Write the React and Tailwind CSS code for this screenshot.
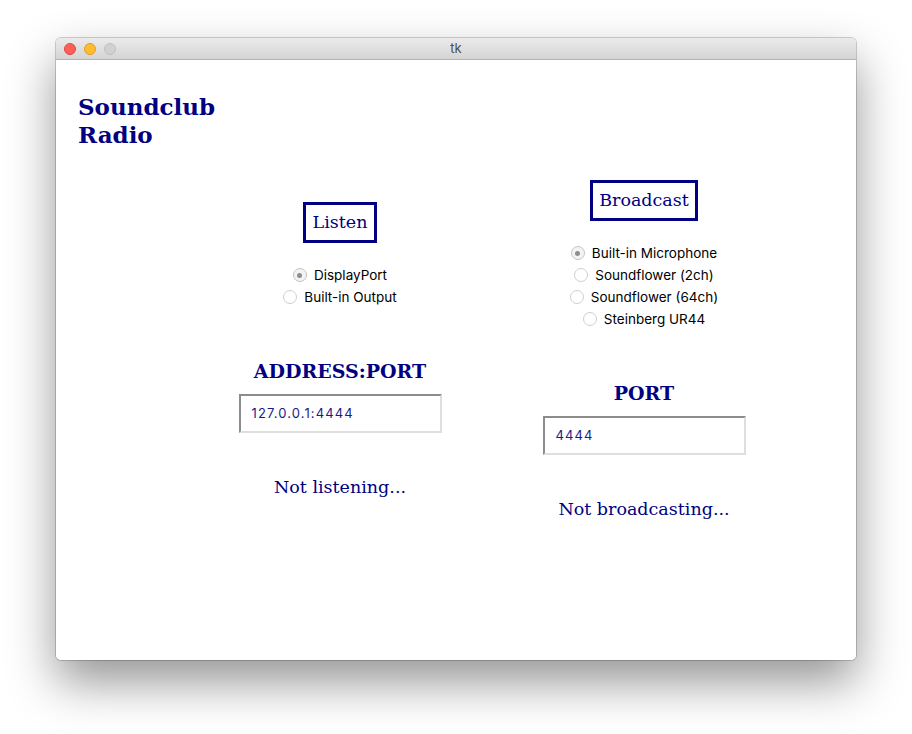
import React from "react";

const serif = { fontFamily: '"DejaVu Serif", Georgia, serif' };
const sans = { fontFamily: 'Inter, "Liberation Sans", sans-serif' };

function Radio({ label, checked }) {
  return (
    <div className="flex h-[22px] items-center justify-center">
      <span
        className={
          "flex h-[14px] w-[14px] items-center justify-center rounded-full border " +
          (checked ? "border-[#c4c4c4] bg-[#f3f3f3]" : "border-[#cfcfcf] bg-white")
        }
      >
        {checked && <span className="h-[5px] w-[5px] rounded-full bg-[#8e8e8e]" />}
      </span>
      <span className="ml-[7px] text-[13.5px] leading-[16px] text-black" style={sans}>
        {label}
      </span>
    </div>
  );
}

function Column({ title, titleW, options, heading, value, status }) {
  return (
    <div className="flex w-[204px] flex-col items-center">
      <div
        className="flex h-[41px] items-center justify-center border-[3px] border-[#000080] text-[17.5px] text-[#000080]"
        style={{ ...serif, width: titleW }}
      >
        {title}
      </div>
      <div className="mt-[21px] flex flex-col items-center">
        {options.map((o, i) => (
          <Radio key={o} label={o} checked={i === 0} />
        ))}
      </div>
      <div
        className="mt-[51px] h-[24px] text-[19px] font-bold leading-[24px] text-[#000080]"
        style={serif}
      >
        {heading}
      </div>
      <div className="mt-[11px] flex h-[39px] w-[203px] items-center border-2 border-b-[#dedede] border-l-[#8c8c8c] border-r-[#dedede] border-t-[#8c8c8c] bg-white pl-[11px]">
        <span className="text-[13px] tracking-[1.1px] text-[#1a1a8c]" style={sans}>
          {value}
        </span>
      </div>
      <div className="mt-[42px] h-[24px] text-[17.5px] leading-[24px] text-[#000080]" style={serif}>
        {status}
      </div>
    </div>
  );
}

export default function App() {
  return (
    <div className="h-[734px] w-[912px] overflow-hidden bg-white pl-[56px] pt-[38px]">
      <div className="h-[622px] w-[800px] overflow-hidden rounded-[5px] shadow-[0_22px_48px_rgba(0,0,0,0.42),0_0_0_1px_rgba(0,0,0,0.18)]">
        <div className="relative flex h-[22px] items-center border-b border-[#b3b3b3] bg-gradient-to-b from-[#ebebeb] to-[#d4d4d4] pl-[8px]">
          <div className="flex gap-[8px]">
            <span className="h-[12px] w-[12px] rounded-full border border-[#e1463f] bg-[#fe5f57]" />
            <span className="h-[12px] w-[12px] rounded-full border border-[#de9f26] bg-[#febc2e]" />
            <span className="h-[12px] w-[12px] rounded-full border border-[#bfbfbf] bg-[#d1d1d1]" />
          </div>
          <div
            className="absolute inset-0 flex items-center justify-center text-[13px] text-[#4d4d4d]"
            style={sans}
          >
            tk
          </div>
        </div>
        <div className="h-[600px] bg-white">
          <div
            className="pl-[22px] pt-[33px] text-[23px] font-bold leading-[28px] text-[#000080]"
            style={serif}
          >
            Soundclub
            <br />
            Radio
          </div>
          <div className="mt-[31px] flex items-center gap-[100px] pl-[182px]">
            <Column
              title="Listen"
              titleW={74}
              options={["DisplayPort", "Built-in Output"]}
              heading="ADDRESS:PORT"
              value="127.0.0.1:4444"
              status="Not listening..."
            />
            <Column
              title="Broadcast"
              titleW={108}
              options={[
                "Built-in Microphone",
                "Soundflower (2ch)",
                "Soundflower (64ch)",
                "Steinberg UR44",
              ]}
              heading="PORT"
              value="4444"
              status="Not broadcasting..."
            />
          </div>
        </div>
      </div>
    </div>
  );
}
